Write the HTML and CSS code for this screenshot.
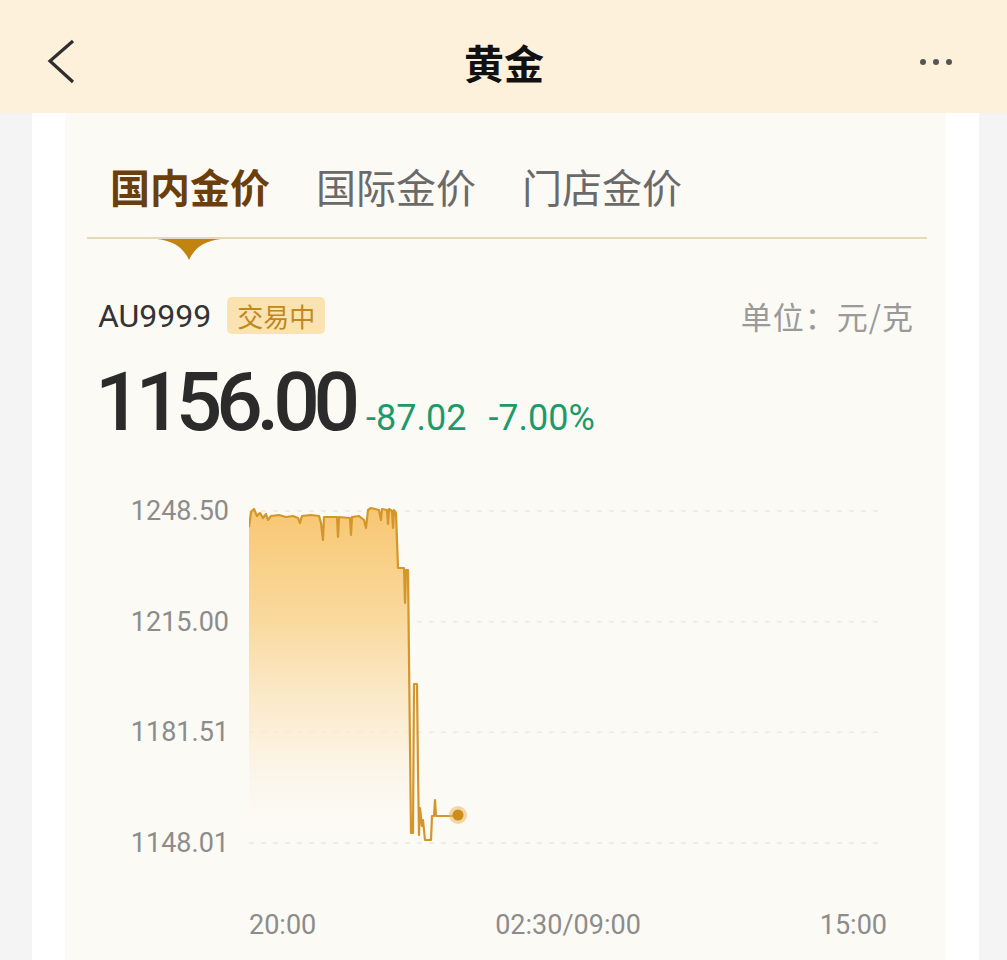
FILE: index.html
```html
<!DOCTYPE html>
<html lang="zh-CN">
    <head>
        <meta charset="UTF-8" />
        <meta name="viewport" content="width=device-width, initial-scale=1.0" />
        <title>黄金</title>
        <link rel="stylesheet" href="styles.css">
    </head>
    <body>
        <header class="topbar">
            <svg class="back" width="30" height="46" viewBox="0 0 30 46">
                <polyline points="26,2 3,22 26,43" fill="none" stroke="#2e2e2e" stroke-width="3.2" stroke-linejoin="miter" />
            </svg>
            <div class="title">黄金</div>
            <svg class="more" width="34" height="8" viewBox="0 0 34 8">
                <circle cx="4" cy="4" r="3" fill="#555" />
                <circle cx="17" cy="4" r="3" fill="#555" />
                <circle cx="30" cy="4" r="3" fill="#555" />
            </svg>
        </header>

        <main class="card">
            <div class="panel">
                <nav class="tabs">
                    <div class="tab active">国内金价
                        <svg class="marker" width="64" height="21" viewBox="0 0 64 21">
                            <path d="M0,0 L64,0 C48,2 38,8 32,21 C26,8 16,2 0,0 Z" fill="#c2840f" />
                        </svg>
                    </div>
                    <div class="tab">国际金价</div>
                    <div class="tab">门店金价</div>
                </nav>

                <div class="quote">
                    <div class="symbol">
                        <span class="code">AU9999</span>
                        <span class="badge">交易中</span>
                    </div>
                    <div class="unit">单位：元/克</div>
                </div>

                <div class="price-row">
                    <span class="price">1156.00</span>
                    <span class="change">-87.02</span>
                    <span class="change">-7.00%</span>
                </div>

                <div class="chart">
                    <div class="y-axis">
                        <span>1248.50</span>
                        <span>1215.00</span>
                        <span>1181.51</span>
                        <span>1148.01</span>
                    </div>
                    <svg class="plot" width="632" height="362" viewBox="0 0 632 362">
                        <defs>
                            <linearGradient id="fill" x1="0" y1="10" x2="0" y2="345" gradientUnits="userSpaceOnUse">
                                <stop offset="0" stop-color="#f7c46a" stop-opacity="0.95" />
                                <stop offset="0.35" stop-color="#f9d593" stop-opacity="0.88" />
                                <stop offset="0.75" stop-color="#fcefd8" stop-opacity="0.65" />
                                <stop offset="1" stop-color="#fcfaf5" stop-opacity="0" />
                            </linearGradient>
                        </defs>
                        <g class="grid">
                            <line x1="0" y1="15" x2="632" y2="15" />
                            <line x1="0" y1="125.7" x2="632" y2="125.7" />
                            <line x1="0" y1="236.3" x2="632" y2="236.3" />
                            <line x1="0" y1="347" x2="632" y2="347" />
                        </g>
                        <path fill="url(#fill)" d="M0,31 L2,16 L5,13 L8,20 L11,17 L14,22 L17,18 L19,24 L22,20 L30,19 L37,21 L44,20 L49,22 L51,27 L53,20 L62,19 L70,20 L72,27 L74,44 L75,21 L88,21 L89,41 L90,21 L101,22 L102,39 L103,21 L110,20 L115,24 L117,32 L119,14 L122,12 L130,14 L132,24 L133,13 L138,14 L139,28 L140,13 L143,15 L144,32 L145,14 L147,17 L149,72 L155,72 L156,107 L157,74 L159,74 L162,350 L0,350 Z" />
                        <path class="line" d="M0,31 L2,16 L5,13 L8,20 L11,17 L14,22 L17,18 L19,24 L22,20 L30,19 L37,21 L44,20 L49,22 L51,27 L53,20 L62,19 L70,20 L72,27 L74,44 L75,21 L88,21 L89,41 L90,21 L101,22 L102,39 L103,21 L110,20 L115,24 L117,32 L119,14 L122,12 L130,14 L132,24 L133,13 L138,14 L139,28 L140,13 L143,15 L144,32 L145,14 L147,17 L149,72 L155,72 L156,107 L157,74 L159,74 L162,337 L164,337 L165,188 L168,188 L169,274 L170,339 L171,312 L173,330 L174,324 L176,344 L182,344 L183,320 L185,320 L186,304 L187,320 L209,320" />
                        <circle cx="209" cy="319" r="9" fill="#eab864" opacity="0.55" />
                        <circle cx="209" cy="319" r="5.5" fill="#cd8c1c" />
                    </svg>
                </div>

                <div class="x-axis">
                    <span>20:00</span>
                    <span>02:30/09:00</span>
                    <span>15:00</span>
                </div>
            </div>
        </main>
    </body>
</html>
```

FILE: styles.css
```css
* {
    box-sizing: border-box;
}
body {
    margin: 0;
    background-color: #f4f4f4;
    font-family: "Noto Sans CJK SC", "Noto Sans", sans-serif;
    color: #2b2b2b;
}
.topbar {
    height: 113px;
    background-color: #fdf1dc;
    display: grid;
    grid-template-columns: 1fr auto 1fr;
    align-items: center;
    padding: 10px 54px 0 47px;
}
.back {
    display: block;
}
.title {
    font-size: 40px;
    font-weight: 700;
    color: #111;
    line-height: 1;
    margin-left: 8px;
}
.more {
    display: block;
    justify-self: end;
}
.card {
    margin-left: 32px;
    width: 947px;
    background-color: #fff;
    padding: 0 33px;
}
.panel {
    background-color: #fcfaf5;
    padding: 0 19px 40px 22px;
}
.tabs {
    display: flex;
    gap: 46px;
    padding: 48px 0 26px 23px;
    border-bottom: 2px solid #e8d8ba;
}
.tab {
    position: relative;
    font-size: 40px;
    line-height: 50px;
    color: #6a6a6a;
}
.tab.active {
    font-weight: 700;
    color: #6b3e0c;
}
.marker {
    position: absolute;
    left: 47px;
    top: 78px;
}
.quote {
    margin-top: 58px;
    display: flex;
    justify-content: space-between;
    align-items: center;
    padding: 0 13px 0 11px;
    height: 37px;
}
.symbol {
    display: flex;
    align-items: center;
    gap: 16px;
}
.code {
    font-family: Roboto, "Noto Sans", sans-serif;
    font-size: 32px;
    color: #333;
}
.badge {
    background-color: #fbe2b1;
    color: #c0881f;
    font-size: 26px;
    line-height: 37px;
    padding: 0 10px;
    border-radius: 5px;
}
.unit {
    font-size: 31px;
    letter-spacing: 1px;
    color: #9a9a9a;
}
.price-row {
    margin-top: 27px;
    padding-left: 8px;
    display: flex;
    align-items: baseline;
    gap: 22px;
    font-family: Roboto, "Noto Sans", sans-serif;
}
.price {
    font-size: 82px;
    line-height: 82px;
    font-weight: 500;
    letter-spacing: -6.2px;
    color: #2b2b2b;
    margin-right: -10px;
}
.change {
    font-size: 36px;
    color: #1c9a6c;
}
.chart {
    margin-top: 53px;
    display: flex;
    gap: 20px;
}
.y-axis {
    width: 142px;
    height: 362px;
    display: flex;
    flex-direction: column;
    justify-content: space-between;
    align-items: flex-end;
    font-family: Roboto, "Noto Sans", sans-serif;
    font-size: 27px;
    line-height: 30px;
    color: #8c8c8c;
}
.plot {
    display: block;
}
.grid line {
    stroke: #ebe9e4;
    stroke-width: 1.5;
    stroke-dasharray: 5 7;
}
.line {
    fill: none;
    stroke: #d3962b;
    stroke-width: 2.2;
    stroke-linejoin: round;
}
.x-axis {
    margin: 52px 0 0 162px;
    width: 638px;
    display: flex;
    justify-content: space-between;
    font-family: Roboto, "Noto Sans", sans-serif;
    font-size: 27px;
    line-height: 30px;
    color: #8c8c8c;
}
```
